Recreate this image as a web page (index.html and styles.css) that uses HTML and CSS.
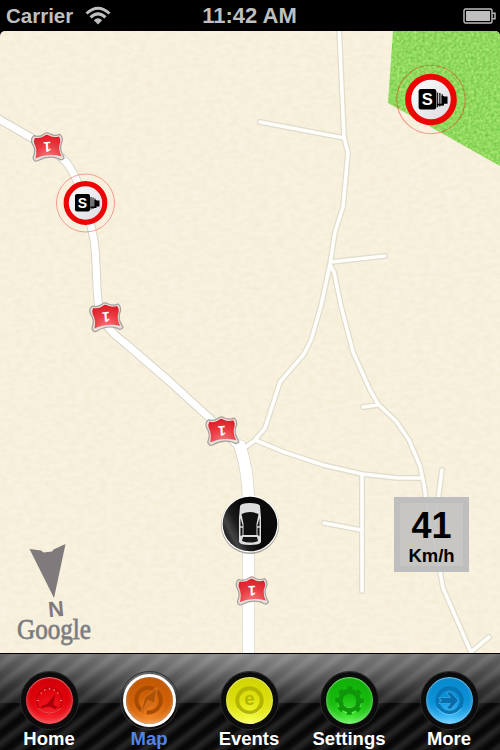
FILE: index.html
```
<!DOCTYPE html>
<html lang="en">
<head>
    <meta charset="UTF-8">
    <meta name="viewport" content="width=device-width, initial-scale=1.0">
    <title>Speed Camera Map</title>
    <link rel="stylesheet" href="styles.css">
</head>
<body>
    <div class="screen">
        <!-- Status bar -->
        <div class="status-bar">
            <div class="status-left">
                <span class="carrier">Carrier</span>
                <svg class="wifi" width="26" height="20" viewBox="0 0 26 20">
                    <path d="M1.500 7.500Q13 -3 24.500 7.500M5.500 11.400Q13 4.400 20.500 11.400" fill="none" stroke="#bfbfbf" stroke-width="3"/>
                    <path d="M8.800 14.200Q13 10.500 17.200 14.200L13 18.500Z" fill="#bfbfbf"/>
                </svg>
            </div>
            <span class="time">11:42 AM</span>
            <div class="status-right">
                <svg width="33" height="16" viewBox="0 0 33 16">
                    <rect x="1" y="1" width="28" height="14" rx="1.5" fill="none" stroke="#bfbfbf" stroke-width="1.4"/>
                    <rect x="3" y="3" width="24" height="10" fill="#bfbfbf"/>
                    <path d="M29.500 5.200H32V10.800H29.500" fill="none" stroke="#bfbfbf" stroke-width="1.400"/>
                </svg>
            </div>
        </div>

        <!-- Map, drawn in screen coordinates -->
        <div class="map">
            <svg class="map-canvas" width="500" height="622" viewBox="0 31 500 622">
                <defs>
                    <filter id="paper" x="0" y="0" width="1" height="1" color-interpolation-filters="sRGB">
                        <feTurbulence type="fractalNoise" baseFrequency="0.13 0.22" numOctaves="2" seed="4"/>
                        <feColorMatrix values="0 0 0 0 0.8  0 0 0 0 0.74  0 0 0 0 0.5  0.2 0 0 0 -0.06"/>
                    </filter>
                    <filter id="grass" x="0" y="0" width="1" height="1" color-interpolation-filters="sRGB">
                        <feTurbulence type="fractalNoise" baseFrequency="0.35" numOctaves="2" seed="8" result="n"/>
                        <feColorMatrix values="0.35 0 0 0 0.39  0.22 0 0 0 0.74  0.3 0 0 0 0.22  0 0 0 0 1"/>
                        <feComposite in2="SourceGraphic" operator="in"/>
                    </filter>
                    <radialGradient id="shieldFill" cx="0.5" cy="1" r="1">
                        <stop offset="0" stop-color="#f47c80"/>
                        <stop offset="0.55" stop-color="#e83a41"/>
                        <stop offset="1" stop-color="#dc1c26"/>
                    </radialGradient>
                    <linearGradient id="signFill" x1="0" y1="0" x2="1" y2="1">
                        <stop offset="0" stop-color="#fff"/>
                        <stop offset="1" stop-color="#d9d9df"/>
                    </linearGradient>
                    <linearGradient id="carFill" x1="0" y1="0.75" x2="1" y2="0.25">
                        <stop offset="0" stop-color="#0a0a0a"/>
                        <stop offset="0.16" stop-color="#444"/>
                        <stop offset="0.3" stop-color="#1c1c1c"/>
                        <stop offset="0.5" stop-color="#080808"/>
                        <stop offset="1" stop-color="#0c0c0c"/>
                    </linearGradient>
                    <g id="roads">
                        <path d="M339 25L344 137L348 153L343 207L335 232L330 264L321 306L311 340L304 354L280 382L265 428L254 441L240 451"/>
                        <path d="M260 122L344 138"/>
                        <path d="M331 262L385 256"/>
                        <path d="M330 265L334 272L341 306L353 352L370 390L378 404L396 421L409 440L420 466L424 485L430 525L438 560L443 588L470 650L476 662"/>
                        <path d="M363 407L378 405"/>
                        <path d="M255 440L284 452L323 465L362 474L398 478L422 478"/>
                        <path d="M362 474L362 591"/>
                        <path d="M324 523L361 530"/>
                        <path d="M442 470L438 500L435 525"/>
                        <path d="M471 652L489 637"/>
                    </g>
                    <g id="highway">
                        <path d="M-10 114L30 137Q56 152 66 162C80 179 88 210 94 240C98 268 95 292 100 315Q108 331 125 343L169 381L215 423L241 449" class="hw-narrow"/>
                        <path d="M240 446Q248 470 248.500 500L248.500 665" class="hw-wide"/>
                    </g>
                    <g id="shield">
                        <path d="M-13 -12Q-7 -10 -3 -13Q0 -15.500 3 -13Q8 -10 13 -12Q16 -9 15 -5Q11 2 15 9L16 12Q13 15 10 12Q0 8 -10 13Q-14 15 -15 10Q-11 2 -15 -4Q-17 -9 -13 -12Z" fill="#e9dfda" stroke="#a3a09b" stroke-width="1.200"/>
                        <path d="M-12 -10Q-6 -8.500 -2 -11.500Q0 -13 2 -11.500Q7 -8.500 12 -10Q14 -7 13 -4Q10 3 13.500 10Q0 6 -12.500 10.500Q-10 2 -13 -4Q-14 -7 -12 -10Z" fill="url(#shieldFill)"/>
                        <text x="0" y="5" transform="rotate(180)" class="shield-num">1</text>
                    </g>
                    <g id="camera">
                        <circle r="29" fill="none" stroke="#f20000" stroke-opacity="0.35" stroke-width="1"/>
                        <circle r="19.300" fill="url(#signFill)" stroke="#ec0505" stroke-width="5.200"/>
                        <rect x="-10.500" y="-9" width="15" height="17.500" rx="2" fill="#000"/>
                        <path d="M5.500 -6V6.500M7.500 -5.500V6M9.500 -4.500V5" stroke="#222" stroke-width="1.200"/>
                        <path d="M9 -3H11V-2.500H14V3.500H11V5H5V3.500H9Z" fill="#000"/>
                        <text x="-3.200" y="4.500" class="camera-letter">S</text>
                    </g>
                </defs>

                <rect y="31" width="500" height="622" fill="#f9f2e0"/>
                <rect y="31" width="500" height="622" filter="url(#paper)"/>
                <path d="M393 31L388 103L500 166V31Z" fill="#8cd65b" filter="url(#grass)"/>

                <use href="#roads" class="road-edge"/>
                <use href="#highway" class="hw-edge"/>
                <use href="#roads" class="road"/>
                <use href="#highway" class="hw"/>

                <use href="#shield" transform="translate(47.500 147) rotate(-3)"/>
                <use href="#shield" transform="translate(106 317) rotate(-5)"/>
                <use href="#shield" transform="translate(222 431) rotate(-4)"/>
                <use href="#shield" transform="translate(252 591) rotate(-2)"/>

                <use href="#camera" transform="translate(85.500 203)"/>
                <use href="#camera" transform="translate(431 99.500) scale(1.180)"/>

                <!-- Current position -->
                <g transform="translate(250 524)">
                    <circle cy="1" r="29" fill="#aaa69b"/>
                    <circle r="28.500" fill="#fff"/>
                    <circle r="27.300" fill="url(#carFill)"/>
                    <path d="M-10 -18Q-9 -21 0 -21Q9 -21 10 -18L11 -6V18Q10 21 0 21Q-10 21 -11 18V-6Z" fill="#dedede"/>
                    <path d="M-8.500 -10Q0 -14 8.500 -10L6.500 0V11H-6.500V0Z" fill="#101010"/>
                    <path d="M-9.500 -6L-7.500 1V11L-9.500 12ZM9.500 -6L7.500 1V11L9.500 12ZM-7 13H7L8 17Q0 20 -8 17Z" fill="#151515"/>
                    <path d="M-10 3H-7M7 3H10" stroke="#dedede" stroke-width="1.500"/>
                </g>

                <!-- Compass -->
                <path d="M29.500 549L41 550.500L43.500 552.500L52 551.500L53.500 549.500L65.500 544L54 598Z" fill="#7f7b7c"/>
                <text x="56" y="616.500" transform="rotate(-5 56 609)" class="north">N</text>
                <text x="17" y="639" textLength="74" lengthAdjust="spacingAndGlyphs" class="google">Google</text>
            </svg>
            <div class="speed">
                <span class="speed-value">41</span>
                <span class="speed-unit">Km/h</span>
            </div>
        </div>

        <!-- Tab bar -->
        <div class="tab-bar">
            <div class="tab">
                <div class="button red">
                    <svg width="48" height="48" viewBox="-24 -24 48 48">
                        <circle r="13" fill="none" stroke="#9b0006" stroke-opacity="0.7" stroke-width="1.200"/>
                        <path d="M-11.500 8Q0 18 11.500 8" fill="none" stroke="#ff6a6a" stroke-width="0.800"/>
                        <path d="M-9 6L-2 3L6 -7L4 4Q7 7 9 6L6 9Q1 5 -4 7L-8 8Z" fill="#a8000a"/>
                        <path d="M-9 -8L-8 -7M0 -13V-11M9 -8L8 -7M-13 0H-11M13 0H11M-5 -11.500L-4.500 -10M5 -11.500L4.500 -10" stroke="#ff8b8b" stroke-width="1.200"/>
                    </svg>
                </div>
                <span class="label">Home</span>
            </div>
            <div class="tab active">
                <div class="button orange">
                    <svg width="48" height="48" viewBox="-24 -24 48 48">
                        <path d="M-6 11A12.500 12.500 0 0 1 4 -12M7 -10A12.500 12.500 0 0 1 -3 12" fill="none" stroke="#a84c04" stroke-width="4"/>
                        <path d="M8 -13L5 2L-9 13L-5 -3Z" fill="#ae5207" stroke="#e8812c" stroke-width="0.700"/>
                        <path d="M-9 13L-2 -1L5 2Z" fill="#d06a16"/>
                    </svg>
                </div>
                <span class="label">Map</span>
            </div>
            <div class="tab">
                <div class="button yellow">
                    <svg width="48" height="48" viewBox="-24 -24 48 48">
                        <circle r="12.500" fill="none" stroke="#b3b503" stroke-width="4"/>
                        <path d="M-12 8A14.500 14.500 0 0 0 12 8" fill="none" stroke="#fbff91" stroke-width="0.800"/>
                        <text x="0" y="5" class="event-letter">e</text>
                    </svg>
                </div>
                <span class="label">Events</span>
            </div>
            <div class="tab">
                <div class="button green">
                    <svg width="48" height="48" viewBox="-24 -24 48 48">
                        <circle cy="0.800" r="12" fill="none" stroke="#7bf06a" stroke-width="1"/>
                        <circle r="9.500" fill="none" stroke="#0e9509" stroke-width="5"/>
                        <circle r="13" fill="none" stroke="#0e9509" stroke-width="3" stroke-dasharray="5.100 5.111" stroke-dashoffset="2.500"/>
                        <path d="M-6 4A7 7 0 0 0 6 4" fill="none" stroke="#6ee55b" stroke-width="0.800"/>
                    </svg>
                </div>
                <span class="label">Settings</span>
            </div>
            <div class="tab">
                <div class="button blue">
                    <svg width="48" height="48" viewBox="-24 -24 48 48">
                        <circle r="12.500" fill="none" stroke="#0874b3" stroke-width="4"/>
                        <path d="M-12 8A14.500 14.500 0 0 0 12 8" fill="none" stroke="#8bd7ff" stroke-width="0.800"/>
                        <path d="M-11 -3H1L-3 -8L1 -9L9 0L1 9L-3 8L1 3H-11L-8 0Z" fill="#086ca9" stroke="#45aee6" stroke-width="0.700"/>
                    </svg>
                </div>
                <span class="label">More</span>
            </div>
        </div>
    </div>
</body>
</html>
```

FILE: styles.css
```
body {
    margin: 0;
    background-color: #000;
    font-family: "Liberation Sans", Arial, sans-serif;
    font-weight: bold;
}

.screen {
    display: flex;
    flex-direction: column;
    width: 500px;
    height: 750px;
    overflow: hidden;
}

/* Status bar */
.status-bar {
    display: flex;
    align-items: center;
    height: 31px;
    padding: 0 4px 0 6px;
    color: #bfbfbf;
}

.status-left, .status-right {
    display: flex;
    align-items: center;
    flex: 1;
    gap: 12px;
}

.status-right {
    justify-content: flex-end;
}

.carrier {
    font-size: 20.5px;
}

.time {
    padding-top: 1px;
    margin-right: 3px;
    font-size: 22px;
}

/* Map */
.map {
    position: relative;
    height: 622px;
    border-radius: 5px 5px 0 0;
    overflow: hidden;
}

.map-canvas {
    display: block;
}

.road, .road-edge, .hw, .hw-edge {
    fill: none;
    stroke-linecap: round;
    stroke-linejoin: round;
}

.road-edge {
    stroke: #dfdccb;
    stroke-width: 6px;
}

.road {
    stroke: #fffefa;
    stroke-width: 3.6px;
}

.hw-edge {
    --narrow: 9px;
    --wide: 13px;
    stroke: #d8d4c7;
}

.hw {
    --narrow: 7px;
    --wide: 11.5px;
    stroke: #fff;
}

.hw-narrow {
    stroke-width: var(--narrow);
}

.hw-wide {
    stroke-width: var(--wide);
}

.shield-num {
    font-size: 14px;
    fill: #fff;
    text-anchor: middle;
}

.camera-letter {
    font-size: 14px;
    fill: #fff;
    text-anchor: middle;
}

.north {
    font-size: 22px;
    fill: #7f7b7c;
    text-anchor: middle;
}

.google {
    font-family: "Liberation Serif", serif;
    font-size: 29px;
    font-weight: normal;
    fill: #77787a;
    stroke: #85868a;
    stroke-width: 0.8px;
}

/* Speed box lies over the map */
.speed {
    position: absolute;
    right: 31px;
    bottom: 81px;
    display: flex;
    flex-direction: column;
    align-items: center;
    box-sizing: border-box;
    width: 75px;
    height: 75px;
    padding-top: 4px;
    border: 6px solid #bebebe;
    background-color: rgba(190, 190, 190, 0.84);
    color: #000;
}

.speed-value {
    font-size: 36px;
    line-height: 38px;
}

.speed-unit {
    font-size: 18.5px;
    line-height: 21px;
}

/* Tab bar with a carbon weave and a glossy upper half */
.tab-bar {
    display: flex;
    box-sizing: border-box;
    height: 97px;
    border-top: 1px solid #000;
    background:
        radial-gradient(ellipse 300px 50px at 50% 0, rgba(255, 255, 255, 0.28), transparent) 0 0 / 100% 49px no-repeat,
        linear-gradient(rgba(255, 255, 255, 0.34), rgba(255, 255, 255, 0.1) 49px, transparent 49px),
        repeating-linear-gradient(142deg, #060606 0, #0a0a0a 4px, #242424 8px, #222 10px, #060606 15.5px);
}

.tab {
    display: flex;
    flex-direction: column;
    align-items: center;
    width: 100px;
    padding-top: 18px;
    margin-left: -1px;
    margin-right: 1px;
}

.button {
    width: 47px;
    height: 47px;
    border: 5px solid #0c0c0c;
    border-radius: 50%;
    box-shadow: 0 0 0 1px #2b2b2b, inset 0 1px 1px rgba(255, 255, 255, 0.5), inset 0 -3px 5px rgba(255, 255, 255, 0.35);
}

.button svg {
    display: block;
    width: 47px;
    height: 47px;
}

.red {
    background: radial-gradient(circle at 50% 80%, #f82028, #de0009 55%, #c60007);
}

.orange {
    background: radial-gradient(circle at 50% 95%, #f58a2b, #d06107 50%, #bd5302);
}

.yellow {
    background: radial-gradient(circle at 50% 95%, #f7ff3e, #dde00b 50%, #cdd003);
}

.green {
    background: radial-gradient(circle at 50% 95%, #4df03d, #16bb0d 50%, #0eaa05);
}

.blue {
    background: radial-gradient(circle at 50% 95%, #49c5ff, #0c91d8 50%, #0786c9);
}

.active .button {
    border-color: transparent;
    background-clip: padding-box;
    box-shadow: inset 0 -2px 4px rgba(255, 255, 255, 0.3), 0 0 0 1px #333;
    outline: 3px solid #fff;
    outline-offset: -5px;
}

.label {
    margin-top: -1px;
    font-size: 18.5px;
    line-height: 21px;
    color: #fff;
}

.active .label {
    color: #5283e6;
}

.event-letter {
    font-size: 19px;
    fill: #b3b503;
    text-anchor: middle;
}
```
